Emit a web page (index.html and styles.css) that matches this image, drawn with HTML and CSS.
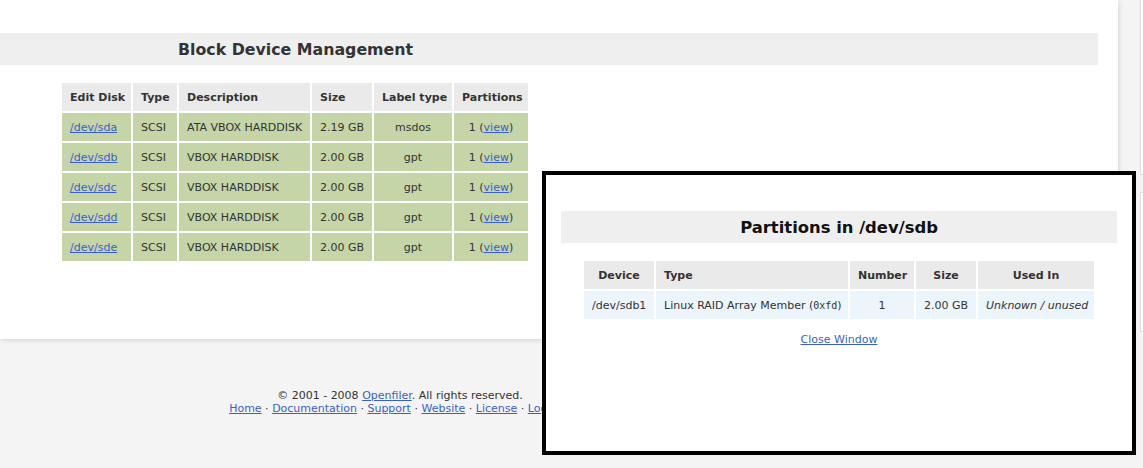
FILE: index.html
```html
<!DOCTYPE html>
<html>
<head>
<meta charset="utf-8">
<title>Block Device Management</title>
<link rel="stylesheet" href="styles.css">
</head>
<body>
<div class="page">
  <div class="main">
    <div class="band"><h1 class="title">Block Device Management</h1></div>
    <table class="grid disks">
      <colgroup><col class="c1"><col class="c2"><col class="c3"><col class="c4"><col class="c5"><col class="c6"></colgroup>
      <thead>
        <tr><th>Edit Disk</th><th>Type</th><th>Description</th><th>Size</th><th class="ctr">Label type</th><th class="ctr">Partitions</th></tr>
      </thead>
      <tbody>
        <tr><td><a href="#">/dev/sda</a></td><td>SCSI</td><td>ATA VBOX HARDDISK</td><td>2.19 GB</td><td class="ctr">msdos</td><td class="ctr">1 (<a href="#">view</a>)</td></tr>
        <tr><td><a href="#">/dev/sdb</a></td><td>SCSI</td><td>VBOX HARDDISK</td><td>2.00 GB</td><td class="ctr">gpt</td><td class="ctr">1 (<a href="#">view</a>)</td></tr>
        <tr><td><a href="#">/dev/sdc</a></td><td>SCSI</td><td>VBOX HARDDISK</td><td>2.00 GB</td><td class="ctr">gpt</td><td class="ctr">1 (<a href="#">view</a>)</td></tr>
        <tr><td><a href="#">/dev/sdd</a></td><td>SCSI</td><td>VBOX HARDDISK</td><td>2.00 GB</td><td class="ctr">gpt</td><td class="ctr">1 (<a href="#">view</a>)</td></tr>
        <tr><td><a href="#">/dev/sde</a></td><td>SCSI</td><td>VBOX HARDDISK</td><td>2.00 GB</td><td class="ctr">gpt</td><td class="ctr">1 (<a href="#">view</a>)</td></tr>
      </tbody>
    </table>
  </div>
  <div class="side">
    <div class="sbox top"></div>
    <div class="sbox lower"></div>
  </div>
</div>
<div class="footer">
  <div>&copy; 2001 - 2008 <a href="#">Openfiler</a>. All rights reserved.</div>
  <div><a href="#">Home</a> &middot; <a href="#">Documentation</a> &middot; <a href="#">Support</a> &middot; <a href="#">Website</a> &middot; <a href="#">License</a> &middot; <a href="#">Log Out</a></div>
</div>
<div class="popup">
  <div class="band pband"><h2 class="ptitle">Partitions in /dev/sdb</h2></div>
  <table class="grid parts">
    <colgroup><col class="p1"><col class="p2"><col class="p3"><col class="p4"><col class="p5"></colgroup>
    <thead>
      <tr><th class="ctr">Device</th><th>Type</th><th class="ctr">Number</th><th class="ctr">Size</th><th class="ctr">Used In</th></tr>
    </thead>
    <tbody>
      <tr><td class="ctr">/dev/sdb1</td><td>Linux RAID Array Member (<span class="mono">0xfd</span>)</td><td class="ctr">1</td><td class="ctr">2.00 GB</td><td class="ctr"><em>Unknown / unused</em></td></tr>
    </tbody>
  </table>
  <div class="close"><a href="#">Close Window</a></div>
</div>
</body>
</html>
```
FILE: styles.css
```css
html, body {
  margin: 0;
  padding: 0;
  overflow: hidden;
}
body {
  background: #f4f4f4;
  font-family: "DejaVu Sans", Verdana, sans-serif;
  font-size: 11px;
  color: #333;
  width: 1143px;
  height: 468px;
  position: relative;
}
a {
  color: #3a5fcd;
  text-decoration: underline;
}
.page {
  display: flex;
  align-items: flex-start;
  width: 1143px;
}
.main {
  flex: 0 0 1118px;
  height: 339px;
  background: #fff;
  box-shadow: 1px 1px 5px rgba(0, 0, 0, 0.13);
  padding-top: 33px;
  box-sizing: border-box;
}
.band {
  background: #efefef;
  height: 32px;
  display: flex;
  align-items: center;
}
.main .band {
  width: 1098px;
}
.title {
  margin: 0 0 0 178px;
  font-size: 15.8px;
  font-weight: bold;
  color: #333;
}
.grid {
  border-collapse: separate;
  border-spacing: 2px;
  table-layout: fixed;
}
.grid th, .grid td {
  height: 28px;
  padding: 0 8px;
  text-align: left;
  white-space: nowrap;
  overflow: hidden;
}
.grid th {
  background: #eaeaea;
  font-weight: bold;
}
.grid .ctr {
  text-align: center;
}
.disks {
  margin: 16px 0 0 60px;
  width: 470px;
}
.disks td {
  background: #c5d5a8;
}
.c1 { width: 69px; }
.c2 { width: 44px; }
.c3 { width: 131px; }
.c4 { width: 60px; }
.c5 { width: 78px; }
.c6 { width: 74px; }
.side {
  margin-left: 22px;
  flex: 0 0 3px;
}
.sbox {
  background: #fff;
  border: 1px solid #dedede;
  border-right: none;
  box-sizing: border-box;
  width: 3px;
}
.sbox.top {
  height: 176px;
  margin-top: -1px;
}
.sbox.lower {
  margin-top: 17px;
  height: 140px;
}
.footer {
  width: 800px;
  margin-top: 50px;
  text-align: center;
  line-height: 13px;
  color: #333;
}
.popup {
  position: absolute;
  left: 542px;
  top: 171px;
  width: 586px;
  height: 276px;
  border: 4px solid #000;
  background: #fff;
}
.pband {
  margin: 36px 15px 0;
  justify-content: center;
}
.ptitle {
  margin: 0;
  font-size: 16.4px;
  font-weight: bold;
  color: #111;
}
.parts {
  margin: 16px auto 0;
  width: 514px;
}
.parts td {
  background: #ecf4fc;
}
.p1 { width: 70px; }
.p2 { width: 192px; }
.p3 { width: 64px; }
.p4 { width: 60px; }
.p5 { width: 116px; }
.mono {
  font-family: "DejaVu Sans Mono", monospace;
  font-size: 10px;
}
.close {
  text-align: center;
  margin-top: 12px;
}
```
